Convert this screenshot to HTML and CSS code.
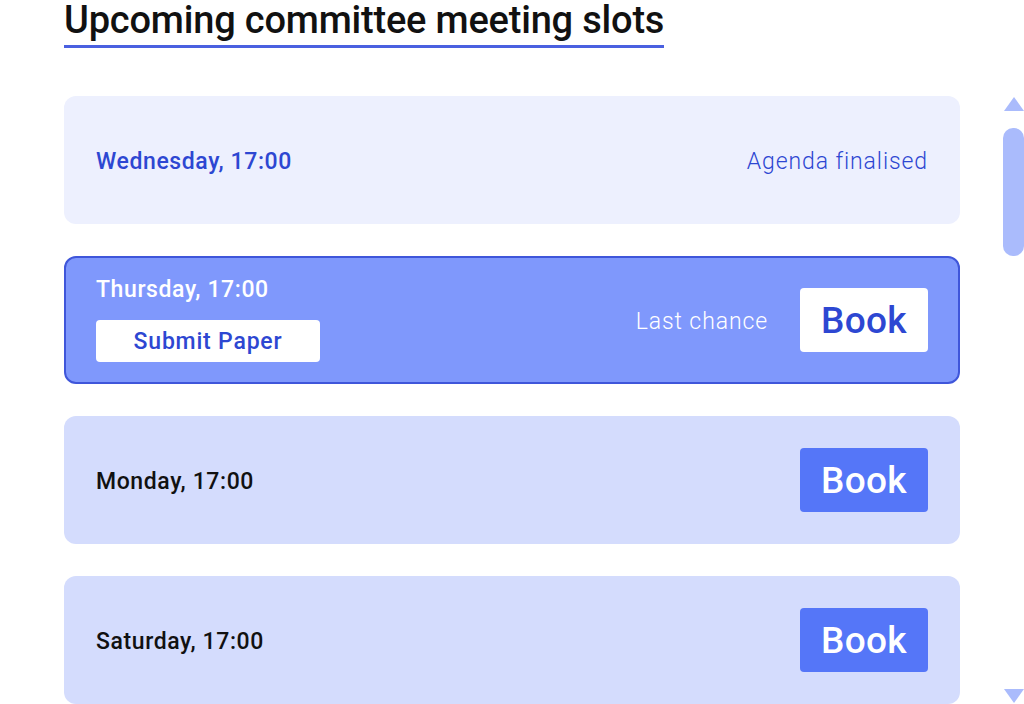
FILE: index.html
```html
<!DOCTYPE html>
<html lang="en">
<head>
<meta charset="utf-8">
<title>Upcoming committee meeting slots</title>
<link rel="stylesheet" href="styles.css">
</head>
<body>
<div class="page">
  <main class="main">
    <h1 class="title">Upcoming committee meeting slots</h1>
    <ul class="slots">
      <li class="slot slot-closed">
        <div class="slot-left">
          <span class="slot-date">Wednesday, 17:00</span>
        </div>
        <div class="slot-right">
          <span class="slot-status">Agenda finalised</span>
        </div>
      </li>
      <li class="slot slot-active">
        <div class="slot-left">
          <span class="slot-date">Thursday, 17:00</span>
          <button class="btn-submit" type="button">Submit Paper</button>
        </div>
        <div class="slot-right">
          <span class="slot-status">Last chance</span>
          <button class="btn-book btn-book-light" type="button">Book</button>
        </div>
      </li>
      <li class="slot slot-open">
        <div class="slot-left">
          <span class="slot-date">Monday, 17:00</span>
        </div>
        <div class="slot-right">
          <button class="btn-book" type="button">Book</button>
        </div>
      </li>
      <li class="slot slot-open">
        <div class="slot-left">
          <span class="slot-date">Saturday, 17:00</span>
        </div>
        <div class="slot-right">
          <button class="btn-book" type="button">Book</button>
        </div>
      </li>
    </ul>
  </main>
  <div class="scrollbar" aria-hidden="true">
    <div class="sb-arrow sb-up"></div>
    <div class="sb-thumb"></div>
    <div class="sb-track"></div>
    <div class="sb-arrow sb-down"></div>
  </div>
</div>
</body>
</html>
```

FILE: styles.css
```css
html, body {
  margin: 0;
  padding: 0;
  background: #ffffff;
}

body {
  font-family: Roboto, "Liberation Sans", Arial, sans-serif;
  color: #111111;
}

.page {
  display: flex;
  height: 704px;
  overflow: hidden;
}

.main {
  flex: 1;
  padding: 0 42px 0 64px;
  display: flex;
  flex-direction: column;
  align-items: flex-start;
}

.title {
  margin: 0;
  font-size: 38px;
  font-weight: 500;
  line-height: 40px;
  letter-spacing: -0.2px;
  color: #111111;
  border-bottom: 3px solid #4a60e0;
  padding-bottom: 5px;
}

.slots {
  list-style: none;
  margin: 48px 0 0 0;
  padding: 0;
  width: 896px;
  display: flex;
  flex-direction: column;
  gap: 32px;
}

.slot {
  box-sizing: border-box;
  height: 128px;
  border-radius: 12px;
  padding: 0 32px;
  display: flex;
  align-items: center;
  justify-content: space-between;
}

.slot-left {
  display: flex;
  flex-direction: column;
  align-items: flex-start;
  gap: 17px;
}

.slot-right {
  display: flex;
  align-items: center;
  gap: 32px;
}

.slot-date {
  font-size: 23px;
  font-weight: 500;
  line-height: 26px;
  letter-spacing: 0.6px;
  padding-top: 4px;
}

.slot-status {
  font-size: 23px;
  font-weight: 300;
  line-height: 26px;
  letter-spacing: 0.9px;
  padding-top: 4px;
}

.slot-closed {
  background: #edf0fe;
}

.slot-closed .slot-date,
.slot-closed .slot-status {
  color: #2d47d2;
}

.slot-active {
  background: #7f98fc;
  border: 2px solid #3f56da;
  padding: 0 30px;
}

.slot-active .slot-date,
.slot-active .slot-status {
  color: #ffffff;
}

.slot-active .slot-left .slot-date {
  padding-top: 6px;
}

.slot-active .slot-left {
  padding-bottom: 7px;
}

.slot-open {
  background: #d4dcfd;
}

.slot-open .slot-date {
  color: #111111;
}

.btn-submit {
  width: 224px;
  height: 42px;
  border: none;
  border-radius: 4px;
  background: #ffffff;
  color: #2d47d2;
  font-family: inherit;
  font-size: 23px;
  font-weight: 500;
  letter-spacing: 0.8px;
  padding: 0;
}

.btn-book {
  width: 128px;
  height: 64px;
  border: none;
  border-radius: 4px;
  background: #5576f8;
  color: #ffffff;
  font-family: inherit;
  font-size: 37px;
  font-weight: 500;
  letter-spacing: 0.3px;
  padding: 0;
}

.btn-book-light {
  background: #ffffff;
  color: #2d47d2;
}

.scrollbar {
  width: 21px;
  flex: 0 0 21px;
  display: flex;
  flex-direction: column;
  align-items: center;
}

.sb-arrow {
  width: 0;
  height: 0;
  border-left: 10px solid transparent;
  border-right: 10px solid transparent;
}

.sb-up {
  margin-top: 97px;
  border-bottom: 14px solid #aabbfc;
}

.sb-thumb {
  margin-top: 17px;
  width: 21px;
  height: 128px;
  border-radius: 10px;
  background: #aabbfc;
}

.sb-track {
  flex: 1;
}

.sb-down {
  margin-bottom: 1px;
  border-top: 14px solid #aabbfc;
}
```
